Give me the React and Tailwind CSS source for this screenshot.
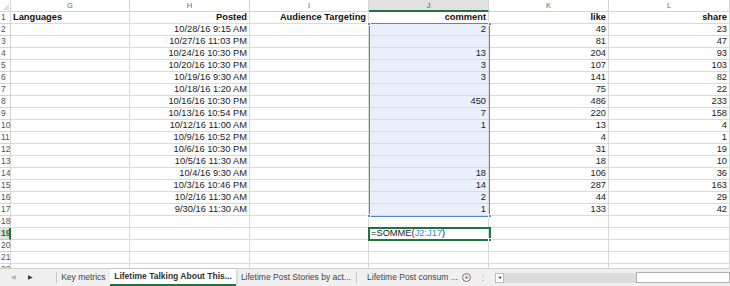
import React from "react";

const rows = [
  ["10/28/16 9:15 AM", "2", "49", "23"],
  ["10/27/16 11:03 PM", "", "81", "47"],
  ["10/24/16 10:30 PM", "13", "204", "93"],
  ["10/20/16 10:30 PM", "3", "107", "103"],
  ["10/19/16 9:30 AM", "3", "141", "82"],
  ["10/18/16 1:20 AM", "", "75", "22"],
  ["10/16/16 10:30 PM", "450", "486", "233"],
  ["10/13/16 10:54 PM", "7", "220", "158"],
  ["10/12/16 11:00 AM", "1", "13", "4"],
  ["10/9/16 10:52 PM", "", "4", "1"],
  ["10/6/16 10:30 PM", "", "31", "19"],
  ["10/5/16 11:30 AM", "", "18", "10"],
  ["10/4/16 9:30 AM", "18", "106", "36"],
  ["10/3/16 10:46 PM", "14", "287", "163"],
  ["10/2/16 11:30 AM", "2", "44", "29"],
  ["9/30/16 11:30 AM", "1", "133", "42"],
];

const cols = ["G", "H", "I", "J", "K", "L"];
const gridCols = "grid grid-cols-[11px_119px_120px_119px_120px_120px_121px]";

function Cell({ children, right, bold, className = "" }) {
  return (
    <div
      className={`h-[12px] border-r border-b border-[#dadada] px-[2px] leading-[11px] whitespace-nowrap overflow-visible text-[9.3px] ${
        right ? "text-right" : "text-left"
      } ${bold ? "font-bold text-[#111]" : "text-[#222]"} ${className}`}
    >
      {children}
    </div>
  );
}

function RowNum({ n, active }) {
  return (
    <div
      className={`h-[12px] border-b leading-[11px] pl-[1px] whitespace-nowrap text-[8.5px] ${
        active
          ? "bg-[#e1e1e1] border-r-2 border-r-[#217346] border-b-[#c8c8c8] font-bold text-[#217346]"
          : "border-r border-[#d4d4d4] text-[#555]"
      }`}
    >
      {n}
    </div>
  );
}

function HScroll() {
  return (
    <div className="flex items-center h-full ml-[8px]">
      <div className="w-[9px] h-[10px] border border-[#bdbdbd] bg-white flex items-center justify-center text-[6px] text-[#555]">
        ◂
      </div>
      <div className="w-[132px] h-[10px] bg-[#dcdcdc]" />
      <div className="w-[94px] h-[11px] border border-[#b0b0b0] bg-white" />
    </div>
  );
}

export default function App() {
  return (
    <div
      className="w-[730px] h-[286px] bg-white overflow-hidden flex flex-col text-[8.5px]"
      style={{ fontFamily: '"Liberation Sans", Arial, sans-serif' }}
    >
      <div className="relative h-[268px] overflow-hidden">
        <div className={gridCols}>
          <div className="h-[12px] border-r border-b border-[#d4d4d4] relative">
            <div className="absolute right-[1px] bottom-[1px] w-0 h-0 border-l-[6px] border-l-transparent border-b-[6px] border-b-[#dcdcdc]" />
          </div>
          {cols.map((c) => (
            <div
              key={c}
              className={`h-[12px] border-r border-[#d4d4d4] text-center leading-[11px] text-[7.5px] ${
                c === "J"
                  ? "bg-[#e1e1e1] border-b-2 border-b-[#217346] text-[#217346]"
                  : "border-b text-[#666]"
              }`}
            >
              {c}
            </div>
          ))}

          <RowNum n={1} />
          <Cell bold>Languages</Cell>
          <Cell right bold>Posted</Cell>
          <Cell right bold>Audience Targeting</Cell>
          <Cell right bold>comment</Cell>
          <Cell right bold>like</Cell>
          <Cell right bold>share</Cell>

          {rows.map((r, i) => (
            <React.Fragment key={i}>
              <RowNum n={i + 2} />
              <Cell />
              <Cell right>{r[0]}</Cell>
              <Cell />
              <Cell right className="bg-[#e9effb]">{r[1]}</Cell>
              <Cell right>{r[2]}</Cell>
              <Cell right>{r[3]}</Cell>
            </React.Fragment>
          ))}

          {[18, 19, 20, 21, 22].map((n) => (
            <React.Fragment key={n}>
              <RowNum n={n} active={n === 19} />
              <Cell />
              <Cell />
              <Cell />
              {n === 19 ? (
                <div className="h-[12px] border-r border-b border-[#dadada] relative whitespace-nowrap leading-[11px] px-[2px] text-[#222] text-[9.3px]">
                  =SOMME(<span className="text-[#3d86d6]">J2:J17</span>)
                </div>
              ) : (
                <Cell />
              )}
              <Cell />
              <Cell />
            </React.Fragment>
          ))}
        </div>

        {/* selection range J2:J17 */}
        <div className="absolute left-[369px] top-[23px] w-[121px] h-[194px] border border-[#4f86dc] pointer-events-none" />
        <div className="absolute left-[367px] top-[22px] w-[4px] h-[4px] bg-[#4f86dc] border border-white" />
        <div className="absolute left-[488px] top-[22px] w-[4px] h-[4px] bg-[#4f86dc] border border-white" />
        <div className="absolute left-[367px] top-[214px] w-[4px] h-[4px] bg-[#4f86dc] border border-white" />
        <div className="absolute left-[488px] top-[214px] w-[4px] h-[4px] bg-[#4f86dc] border border-white" />

        {/* active cell J19 */}
        <div className="absolute left-[368px] top-[227px] w-[123px] h-[14px] border-2 border-[#217346] pointer-events-none" />
        <div className="absolute left-[488px] top-[238px] w-[4px] h-[4px] bg-[#217346] border border-white" />
      </div>

      <div className="h-[18px] bg-[#f0f0f0] border-t border-[#d0d0d0] flex items-stretch text-[8.5px] text-[#444]">
        <div className="w-[57px] flex items-center pl-[11px] gap-[12px] border-r border-[#c8c8c8] my-[3px]">
          <span className="text-[6px] text-[#b0b0b0]">◀</span>
          <span className="text-[6px] text-[#333]">▶</span>
        </div>
        <div className="w-[54px] flex items-center justify-center">Key metrics</div>
        <div className="w-[127px] bg-white flex items-center justify-center font-bold border-b-2 border-[#217346] shadow-[1px_0_2px_rgba(0,0,0,0.15)]">
          <span className="text-[#333]">Lifetime Talking About This...</span>
        </div>
        <div className="w-[122px] flex items-center justify-center border-r border-[#c8c8c8] my-[3px]">
          Lifetime Post Stories by act...
        </div>
        <div className="w-[104px] flex items-center justify-center pl-[8px]">Lifetime Post consum ...</div>
        <div className="flex items-center ml-[2px]">
          <span className="w-[9px] h-[9px] rounded-full border border-[#777] flex items-center justify-center text-[8px] leading-none text-[#555]">
            +
          </span>
        </div>
        <div className="flex items-center ml-[8px] text-[#aaa] text-[8px]">⋮</div>
        <HScroll />
      </div>
    </div>
  );
}
